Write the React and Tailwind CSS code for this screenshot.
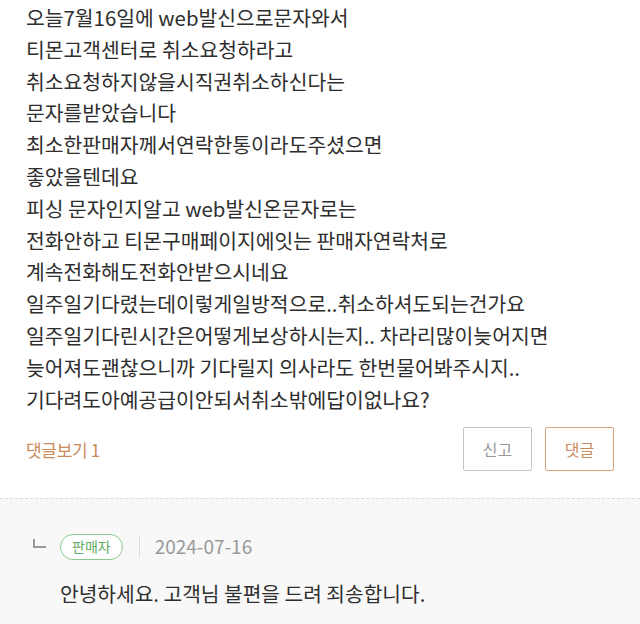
import React from "react";

const lines = [
    "오늘7월16일에 web발신으로문자와서",
    "티몬고객센터로 취소요청하라고",
    "취소요청하지않을시직권취소하신다는",
    "문자를받았습니다",
    "최소한판매자께서연락한통이라도주셨으면",
    "좋았을텐데요",
    "피싱 문자인지알고 web발신온문자로는",
    "전화안하고 티몬구매페이지에잇는 판매자연락처로",
    "계속전화해도전화안받으시네요",
    "일주일기다렸는데이렇게일방적으로..취소하셔도되는건가요",
    "일주일기다린시간은어떻게보상하시는지.. 차라리많이늦어지면",
    "늦어져도괜찮으니까 기다릴지 의사라도 한번물어봐주시지..",
    "기다려도아예공급이안되서취소밖에답이없나요?",
];

const font = { fontFamily: '"Noto Sans CJK KR", "Noto Sans", sans-serif' };

export default function App() {
    return (
        <div className="w-[640px] h-[624px] bg-white overflow-hidden" style={font}>
            {/* Review body */}
            <div className="px-[26px] pt-[2px]">
                {lines.map((line, i) => (
                    <p key={i} className="text-[20.4px] leading-[31.8px] text-[#2e2e2e] whitespace-nowrap">
                        {line}
                    </p>
                ))}
            </div>

            {/* Actions */}
            <div className="flex items-center justify-between pl-[26px] pr-[26px] mt-[12px]">
                <span className="text-[17px] text-[#c98a5c] tracking-[-0.3px]">댓글보기 1</span>
                <div className="flex gap-[13px]">
                    <button className="w-[69px] h-[44px] border border-[#c4c4c4] rounded-[2px] text-[16px] text-[#9a9a9a]">
                        신고
                    </button>
                    <button className="w-[69px] h-[44px] border border-[#d6a37c] rounded-[2px] text-[16px] text-[#c98a5c]">
                        댓글
                    </button>
                </div>
            </div>

            {/* Reply */}
            <div className="mt-[27px] border-t border-dashed border-[#dcdcdc] bg-[#f8f8f8] h-[200px]">
                <div className="flex items-center pl-[33px] pt-[33px]">
                    <span className="w-[13px] h-[9px] border-l-2 border-b-2 border-[#9a9a9a] mb-[6px]"></span>
                    <span className="ml-[14px] h-[26px] px-[11px] flex items-center border border-[#8cc98f] rounded-full text-[14px] text-[#5faa63] bg-white">
                        판매자
                    </span>
                    <span className="ml-[16px] w-px h-[22px] bg-[#dddddd]"></span>
                    <span className="ml-[15px] text-[19px] text-[#9a9a9a]">2024-07-16</span>
                </div>
                <p className="pl-[60px] mt-[17px] text-[20.3px] text-[#2e2e2e]">
                    안녕하세요. 고객님 불편을 드려 죄송합니다.
                </p>
            </div>
        </div>
    );
}
